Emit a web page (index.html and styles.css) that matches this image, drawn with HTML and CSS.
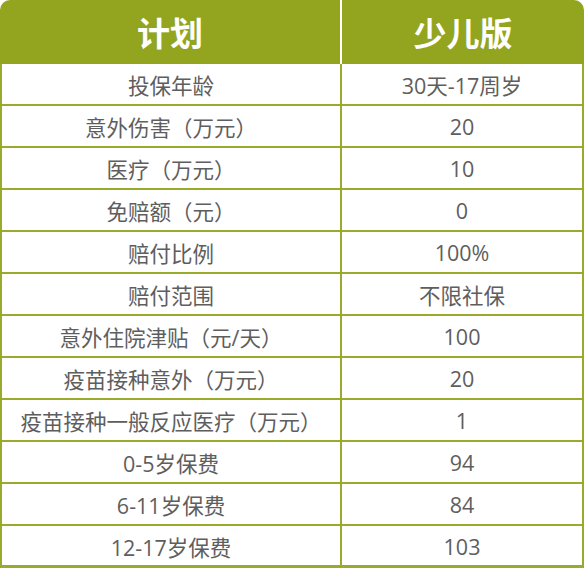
FILE: index.html
```html
<!DOCTYPE html>
<html lang="zh">
<head>
<meta charset="utf-8">
<link rel="stylesheet" href="styles.css">
</head>
<body>
<div class="tbl">
  <div class="row head"><div class="cell">计划</div><div class="cell">少儿版</div></div>
  <div class="row"><div class="cell">投保年龄</div><div class="cell">30天-17周岁</div></div>
  <div class="row"><div class="cell">意外伤害（万元）</div><div class="cell">20</div></div>
  <div class="row"><div class="cell">医疗（万元）</div><div class="cell">10</div></div>
  <div class="row"><div class="cell">免赔额（元）</div><div class="cell">0</div></div>
  <div class="row"><div class="cell">赔付比例</div><div class="cell">100%</div></div>
  <div class="row"><div class="cell">赔付范围</div><div class="cell">不限社保</div></div>
  <div class="row"><div class="cell">意外住院津贴（元/天）</div><div class="cell">100</div></div>
  <div class="row"><div class="cell">疫苗接种意外（万元）</div><div class="cell">20</div></div>
  <div class="row"><div class="cell">疫苗接种一般反应医疗（万元）</div><div class="cell">1</div></div>
  <div class="row"><div class="cell">0-5岁保费</div><div class="cell">94</div></div>
  <div class="row"><div class="cell">6-11岁保费</div><div class="cell">84</div></div>
  <div class="row"><div class="cell">12-17岁保费</div><div class="cell">103</div></div>
</div>
</body>
</html>
```
FILE: styles.css
```css
html, body {
  margin: 0;
  padding: 0;
  background: #ffffff;
}
.tbl {
  width: 584px;
  font-family: "Open Sans", "Noto Sans CJK SC", sans-serif;
  color: #5e5e5e;
  font-size: 21.5px;
}
.row {
  display: grid;
  grid-template-columns: 342px 242px;
  height: 42px;
  box-sizing: border-box;
  border-bottom: 2px solid #9aaa2a;
}
.row .cell {
  display: flex;
  align-items: center;
  justify-content: center;
  box-sizing: border-box;
  white-space: nowrap;
  padding-top: 1px;
}
.row .cell:first-child {
  border-left: 2px solid #9aaa2a;
  border-right: 2px solid #9aaa2a;
}
.row .cell:last-child {
  border-right: 2px solid #9aaa2a;
}
.row.head {
  height: 64px;
  background: #93a51f;
  border-radius: 10px 10px 0 0;
  border-bottom: none;
  color: #ffffff;
  font-size: 33px;
  font-weight: 700;
  font-family: "Noto Sans CJK SC", sans-serif;
}
.row.head .cell {
  padding-top: 0;
}
.row.head .cell:first-child {
  border-left: none;
  border-right: 2px solid #ffffff;
}
.row.head .cell:last-child {
  border-right: none;
}
.row:last-child {
  border-bottom-width: 3px;
}
```
